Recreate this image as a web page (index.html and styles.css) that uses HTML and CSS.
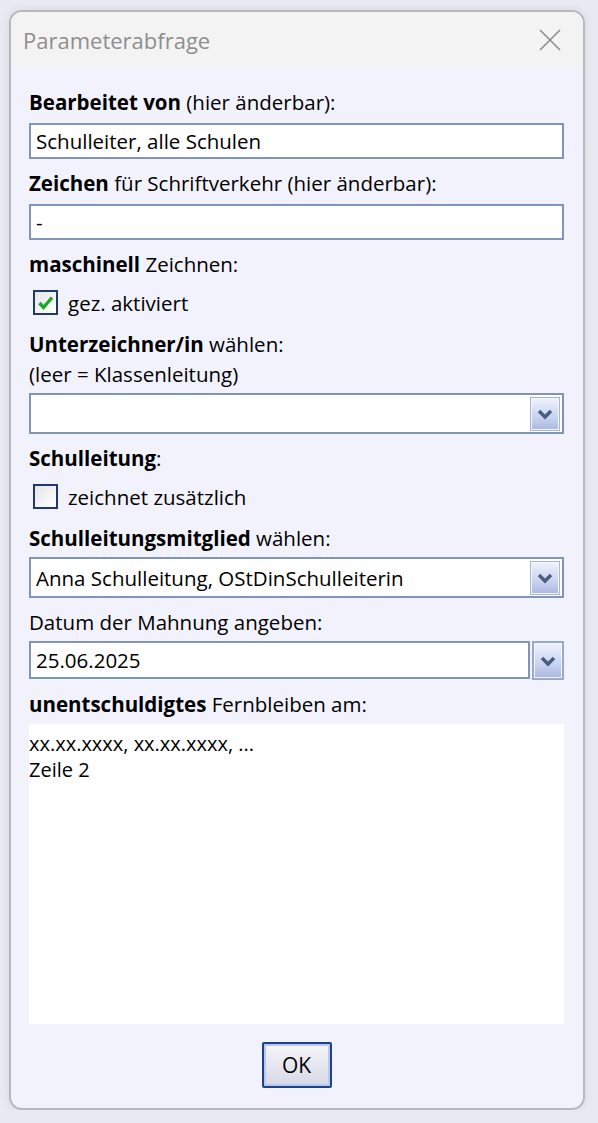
FILE: index.html
```html
<!DOCTYPE html>
<html lang="de">
<head>
  <meta charset="UTF-8">
  <meta name="viewport" content="width=device-width, initial-scale=1.0">
  <title>Parameterabfrage</title>
  <link rel="stylesheet" href="styles.css">
</head>
<body>

  <div class="window">
    <!-- Titelleiste -->
    <div class="titlebar">
      <span class="title">Parameterabfrage</span>
      <svg class="close" width="22" height="22" viewBox="0 0 22 22">
        <path d="M1 1 L21 21 M21 1 L1 21" stroke="#8c8c8c" stroke-width="1.6" fill="none"/>
      </svg>
    </div>

    <div class="content">
      <div class="label"><b>Bearbeitet von</b> (hier änderbar):</div>
      <div class="field">Schulleiter, alle Schulen</div>

      <div class="label gap"><b>Zeichen</b> für Schriftverkehr (hier änderbar):</div>
      <div class="field">-</div>

      <div class="label gap"><b>maschinell</b> Zeichnen:</div>
      <div class="check-row">
        <span class="checkbox">
          <svg width="18" height="18" viewBox="0 0 18 18">
            <path d="M2.5 9 L6.5 13.5 L15 3.5" stroke="#1fa62b" stroke-width="3.4" fill="none"/>
          </svg>
        </span>
        <span>gez. aktiviert</span>
      </div>

      <div class="label"><b>Unterzeichner/in</b> wählen:</div>
      <div class="label">(leer = Klassenleitung)</div>
      <div class="select">
        <span class="select-text"></span>
        <span class="drop-btn">
          <svg width="16" height="12" viewBox="0 0 16 12"><path d="M2 3 L8 9 L14 3" stroke="#4a5e80" stroke-width="3.4" fill="none"/></svg>
        </span>
      </div>

      <div class="label gap"><b>Schulleitung</b>:</div>
      <div class="check-row">
        <span class="checkbox"></span>
        <span>zeichnet zusätzlich</span>
      </div>

      <div class="label"><b>Schulleitungsmitglied</b> wählen:</div>
      <div class="select">
        <span class="select-text">Anna Schulleitung, OStDinSchulleiterin</span>
        <span class="drop-btn">
          <svg width="16" height="12" viewBox="0 0 16 12"><path d="M2 3 L8 9 L14 3" stroke="#4a5e80" stroke-width="3.4" fill="none"/></svg>
        </span>
      </div>

      <div class="label gap">Datum der Mahnung angeben:</div>
      <div class="date-row">
        <div class="field date">25.06.2025</div>
        <span class="drop-btn single">
          <svg width="16" height="12" viewBox="0 0 16 12"><path d="M2 3 L8 9 L14 3" stroke="#4a5e80" stroke-width="3.4" fill="none"/></svg>
        </span>
      </div>

      <div class="label gap"><b>unentschuldigtes</b> Fernbleiben am:</div>
      <div class="memo">
        <div>xx.xx.xxxx, xx.xx.xxxx, ...</div>
        <div>Zeile 2</div>
      </div>

      <div class="footer">
        <button class="ok">OK</button>
      </div>
    </div>
  </div>

</body>
</html>
```

FILE: styles.css
```css
body {
  margin: 0;
  background-color: #e9e9f1;
  font-family: "Open Sans", "Noto Sans", sans-serif;
  color: #000;
}

/* Dialogfenster */
.window {
  width: 572px;
  height: 1096px;
  margin: 10px 0 0 9px;
  border: 2px solid #b8b8bc;
  border-radius: 13px;
  overflow: hidden;
  background-color: #f2f2fd;
  box-shadow: 0 0 8px rgba(0, 0, 0, 0.08);
}

.titlebar {
  height: 54px;
  background-color: #f3f3f3;
  display: flex;
  align-items: center;
  justify-content: space-between;
  padding: 0 22px 0 12px;
}

.title {
  font-size: 22px;
  color: #8e8e8e;
  margin-top: 2px;
}

.close {
  margin-top: 2px;
}

.content {
  padding: 21px 19px 0 18px;
}

.label {
  font-size: 20.5px;
  line-height: 30px;
  white-space: nowrap;
}

.label.gap {
  margin-top: 9px;
}

.field {
  height: 32px;
  margin-top: 6px;
  border: 2px solid #8196b6;
  background-color: #fff;
  font-size: 20.5px;
  line-height: 32px;
  padding-left: 5px;
}

/* Checkboxen */
.check-row {
  display: flex;
  align-items: center;
  gap: 10px;
  margin: 11px 0 14px 4px;
  font-size: 20.5px;
  height: 25px;
}

.checkbox {
  width: 21px;
  height: 21px;
  border: 2px solid #1f3a6b;
  background: linear-gradient(135deg, #e6e6e6, #ffffff);
  display: flex;
  align-items: center;
  justify-content: center;
}

/* Auswahllisten */
.select {
  height: 37px;
  margin-top: 4px;
  border: 2px solid #8196b6;
  background-color: #fff;
  display: flex;
  align-items: center;
  justify-content: space-between;
  padding: 0 2px 0 5px;
  font-size: 20.5px;
}

.drop-btn {
  width: 28px;
  height: 32px;
  border: 1px solid #a7b5d2;
  box-shadow: inset 0 0 0 1px #f4f6ff;
  background: linear-gradient(#f0f3fd, #c8d3f0 60%, #a9b8e0);
  display: flex;
  align-items: center;
  justify-content: center;
}

.date-row {
  display: flex;
  gap: 2px;
  margin-top: 4px;
}

.field.date {
  flex: 1;
  margin-top: 0;
  height: 34px;
  line-height: 34px;
}

.drop-btn.single {
  height: 35px;
  border: 2px solid #9aa9c6;
}

/* Mehrzeiliges Feld */
.memo {
  height: 292px;
  margin-top: 5px;
  background-color: #fff;
  font-size: 20px;
  line-height: 26px;
  padding: 7px 0 1px 0;
}

.footer {
  display: flex;
  justify-content: center;
  margin-top: 18px;
}

.ok {
  width: 70px;
  height: 46px;
  border: 2px solid #1d4384;
  border-radius: 2px;
  box-shadow: inset 0 0 0 2px #b9c8f0;
  background: linear-gradient(#f6f6fa, #d6d8e4);
  font-family: "Open Sans", "Noto Sans", sans-serif;
  font-size: 21px;
  color: #000;
  padding: 0;
}
```
